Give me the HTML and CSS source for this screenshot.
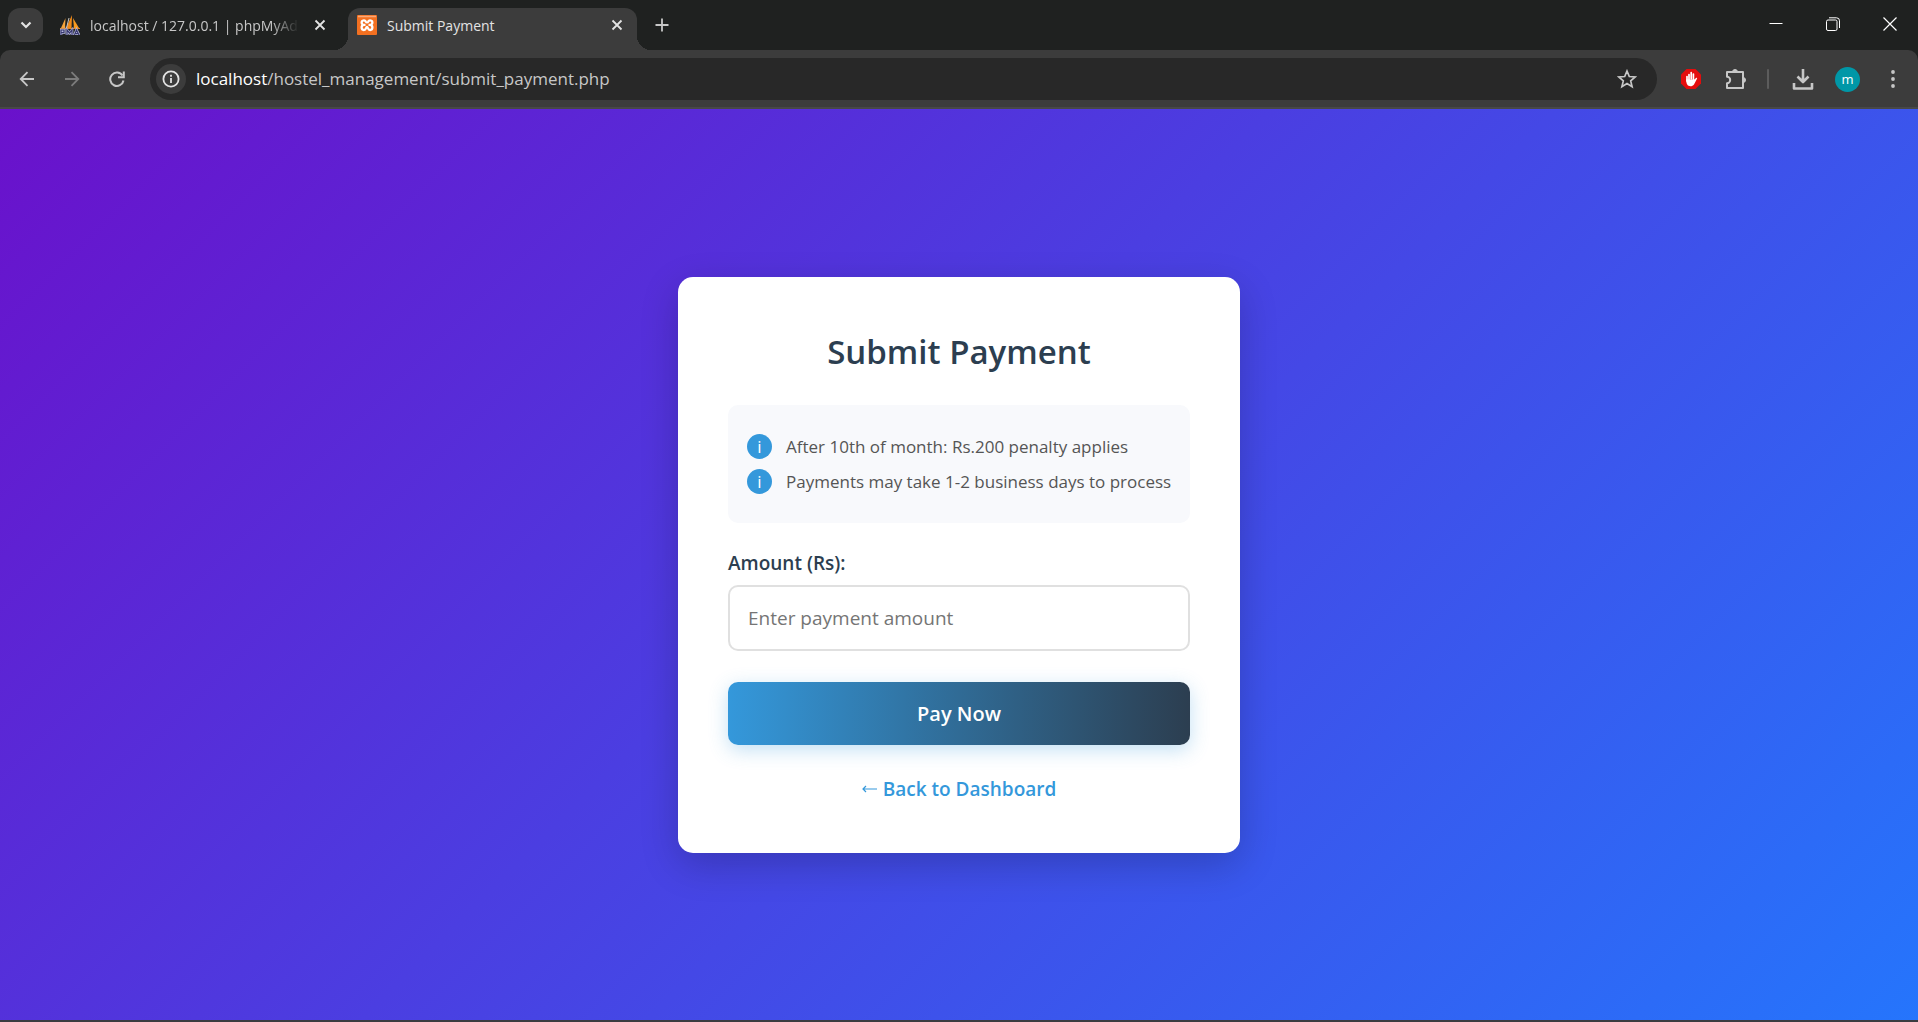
FILE: index.html
```html
<!DOCTYPE html>
<html lang="en">
<head>
<meta charset="utf-8">
<meta name="viewport" content="width=device-width, initial-scale=1">
<title>Submit Payment</title>
<link rel="stylesheet" href="styles.css">
</head>
<body>
<header class="browser">
  <div class="tab-strip">
    <button class="tab-search" type="button" aria-label="Search tabs">
      <svg width="12" height="8" viewBox="0 0 12 8"><path d="M1.5 1.5 6 6l4.500-4.500" fill="none" stroke="#e3e3e3" stroke-width="2.200"/></svg>
    </button>
    <div class="tab">
      <svg class="favicon" viewBox="0 0 20 20">
        <path d="M5.500 3 1 13h4z" fill="#f5a33a"/>
        <path d="M12 0 6 13h5.500z" fill="#f08a1a"/>
        <path d="M13 3l1 10h5z" fill="#f79a1f"/>
        <path d="M9 3 6.500 13" stroke="#c9c9c9" fill="none"/>
        <path d="M0 13.500h20" stroke="#d9822a" fill="none"/>
        <path d="M1 20v-5h3v2.500H1M7 20v-5l2.500 3 2.500-3v5M14.500 20l2-5 2.500 5M15 18.500h3" stroke="#b9bce0" stroke-width="2.600" fill="none"/>
        <path d="M1 20v-5h3v2.500H1M7 20v-5l2.500 3 2.500-3v5M14.500 20l2-5 2.500 5M15 18.500h3" stroke="#38386e" stroke-width="1.200" fill="none"/>
      </svg>
      <span class="tab-title tab-title-fade">localhost / 127.0.0.1 | phpMyAd</span>
      <button class="tab-close" type="button" aria-label="Close tab">
        <svg width="12" height="12" viewBox="0 0 12 12"><path d="m1.500 1.500 9 9m0-9-9 9" stroke="currentColor" stroke-width="1.800"/></svg>
      </button>
    </div>
    <div class="tab tab-active">
      <svg class="favicon" viewBox="0 0 20 20">
        <rect width="20" height="20" rx="1" fill="#f37021"/>
        <path d="M1 1.500h18" stroke="#f9a878" stroke-width="1.500"/>
        <path d="M8.500 9.800H6.800a2.200 2.200 0 1 1 2-3.200c.6 1 1.800 1 2.400 0a2.200 2.200 0 1 1 2 3.200h-1.700M6.800 9.800c-3 .4-2.800 5.200 0 5.200 2.600 0 2-3 3.200-3s.6 3 3.200 3c2.800 0 3-4.800 0-5.200" fill="none" stroke="#fff" stroke-width="2.300"/>
      </svg>
      <span class="tab-title">Submit Payment</span>
      <button class="tab-close" type="button" aria-label="Close tab">
        <svg width="12" height="12" viewBox="0 0 12 12"><path d="m1.500 1.500 9 9m0-9-9 9" stroke="currentColor" stroke-width="1.800"/></svg>
      </button>
    </div>
    <button class="new-tab" type="button" aria-label="New tab">
      <svg width="14" height="14" viewBox="0 0 14 14"><path d="M7 .5v13M.5 7h13" stroke="#c7c7c7" stroke-width="1.800"/></svg>
    </button>
    <div class="window-controls">
      <button type="button" aria-label="Minimize"><svg width="14" height="14" viewBox="0 0 14 14"><path d="M.5 6.500h13" stroke="#fff"/></svg></button>
      <button type="button" aria-label="Restore"><svg width="14" height="14" viewBox="0 0 14 14" fill="none" stroke="#fff"><rect x=".5" y="3" width="10.500" height="10.500" rx="1.500"/><path d="M3 .8h7.500a3 3 0 0 1 3 3V11"/></svg></button>
      <button type="button" aria-label="Close window"><svg width="14" height="14" viewBox="0 0 14 14"><path d="m.5.5 13 13m0-13-13 13" stroke="#fff" stroke-width="1.200"/></svg></button>
    </div>
  </div>
  <div class="toolbar">
    <button class="tool" type="button" aria-label="Back"><svg width="16" height="16" viewBox="0 0 16 16" fill="none" stroke="#c7c7c7" stroke-width="1.800"><path d="M15 8H2M8.500 1.200 1.700 8l6.800 6.800"/></svg></button>
    <button class="tool" type="button" aria-label="Forward" disabled><svg width="16" height="16" viewBox="0 0 16 16" fill="none" stroke="#7c7c7c" stroke-width="1.800"><path d="M1 8h13M7.500 1.200 14.300 8l-6.800 6.800"/></svg></button>
    <button class="tool" type="button" aria-label="Reload"><svg width="16" height="16" viewBox="0 0 16 16" fill="none" stroke="#c7c7c7" stroke-width="2"><path d="M14.500 9.500A6.700 6.700 0 1 1 13.500 4.500"/><path d="M14.800.5v5.800H9"/></svg></button>
    <div class="omnibox">
      <button class="site-info" type="button" aria-label="View site information"><svg width="18" height="18" viewBox="0 0 18 18"><circle cx="9" cy="9" r="7.600" fill="none" stroke="#e3e3e3" stroke-width="1.800"/><path d="M9 8v5M9 4.800v2" stroke="#e3e3e3" stroke-width="1.800"/></svg></button>
      <div class="url"><span class="url-host">localhost</span>/hostel_management/submit_payment.php</div>
      <button class="bookmark" type="button" aria-label="Bookmark this tab"><svg width="20" height="20" viewBox="0 0 20 20"><path d="m10 2 2.300 5.500 5.900.5-4.500 3.900 1.400 5.800-5.100-3.100-5.100 3.100 1.400-5.800L1.800 8l5.900-.5z" fill="none" stroke="#c7c7c7" stroke-width="1.700"/></svg></button>
    </div>
    <button class="tool" type="button" aria-label="Ad blocker"><svg width="22" height="22" viewBox="0 0 22 22"><path d="M6.500 1h9L21 6.500v9L15.500 21h-9L1 15.500v-9z" fill="#e40d0d"/><path d="M9 12V6.500M11.200 11V4.500M13.400 12V6M7 13V8.500" stroke="#fff" stroke-width="1.700" stroke-linecap="round"/><path d="M6.200 11.500h8l1.900-1.600c.8-.4 1.300.2.900.9L14 16.500c-1.500 2.400-5.500 2.200-6.600.3-.9-1.500-1.200-3-1.200-5.300" fill="#fff"/></svg></button>
    <button class="tool" type="button" aria-label="Extensions"><svg width="22" height="22" viewBox="0 0 22 22"><path d="M2 4h16v16H2v-4.800a3.200 3.200 0 0 0 0-6.400z" fill="none" stroke="#c7c7c7" stroke-width="2" stroke-linejoin="round"/><path d="M7.500 4a2.500 2.500 0 0 1 5 0M18 9.500a2.500 2.500 0 0 1 0 5" fill="#c7c7c7" stroke="#c7c7c7"/></svg></button>
    <span class="divider"></span>
    <button class="tool" type="button" aria-label="Downloads"><svg width="22" height="22" viewBox="0 0 22 22" fill="none" stroke="#c7c7c7" stroke-width="2.600"><path d="M11 1v13M5.500 8.500l5.500 5.500 5.500-5.500M2 15v5.500h18V15" stroke-linejoin="round"/></svg></button>
    <button class="tool" type="button" aria-label="Profile"><span class="avatar">m</span></button>
    <button class="tool" type="button" aria-label="Menu"><svg width="4" height="18" viewBox="0 0 4 18" fill="#c7c7c7"><circle cx="2" cy="2" r="1.900"/><circle cx="2" cy="9" r="1.900"/><circle cx="2" cy="16" r="1.900"/></svg></button>
  </div>
</header>
<main class="page">
  <section class="card">
    <h1 class="card-title">Submit Payment</h1>
    <ul class="notes">
      <li><span class="note-icon">i</span>After 10th of month: Rs.200 penalty applies</li>
      <li><span class="note-icon">i</span>Payments may take 1-2 business days to process</li>
    </ul>
    <form class="form">
      <label class="label" for="amount">Amount (Rs):</label>
      <input class="amount" id="amount" type="text" inputmode="decimal" placeholder="Enter payment amount">
      <button class="pay" type="submit">Pay Now</button>
    </form>
    <a class="back" href="#"><svg width="15" height="8" viewBox="0 0 15 8" fill="none" stroke="currentColor" stroke-width="1.200" aria-hidden="true"><path d="M15 4H1.500M4 1 1 4l3 3"/></svg>Back to Dashboard</a>
  </section>
</main>
</body>
</html>
```
FILE: styles.css
```css
* {
  box-sizing: border-box;
}

body {
  margin: 0;
  min-height: 100vh;
  display: flex;
  flex-direction: column;
  font-family: "Open Sans", "Noto Sans", sans-serif;
  background: #1f2120;
}

button {
  display: flex;
  align-items: center;
  justify-content: center;
  padding: 0;
  border: 0;
  background: none;
  color: inherit;
  font: inherit;
}

svg {
  display: block;
  flex: none;
}

/* Browser frame */
.tab-strip {
  display: flex;
  height: 50px;
  padding: 8px 0 0 8px;
  color: #c7c7c7;
  font-size: 14px;
}

.tab-search {
  width: 35px;
  height: 34px;
  border-radius: 12px;
  background: #3c3c3c;
}

.tab {
  display: flex;
  align-items: center;
  width: 289px;
  height: 42px;
  margin-left: 8px;
  padding: 0 11px 8px 9px;
}

.tab-active {
  position: relative;
  background: #3c3c3c;
  border-radius: 12px 12px 0 0;
  color: #e3e3e3;
}

.tab-active::before,
.tab-active::after {
  content: "";
  position: absolute;
  bottom: 0;
  width: 14px;
  height: 14px;
}

.tab-active::before {
  right: 100%;
  background: radial-gradient(circle at 0 0, transparent 14px, #3c3c3c 14px);
}

.tab-active::after {
  left: 100%;
  background: radial-gradient(circle at 100% 0, transparent 14px, #3c3c3c 14px);
}

.favicon {
  width: 20px;
  height: 20px;
  margin-right: 10px;
}

.tab-title {
  flex: 1;
  min-width: 0;
  padding-top: 2px;
  line-height: 20px;
  overflow: hidden;
  white-space: nowrap;
}

.tab-title-fade {
  mask-image: linear-gradient(90deg, #000 calc(100% - 28px), transparent);
}

.tab-close {
  width: 18px;
  height: 18px;
  margin-left: 12px;
  color: #e3e3e3;
}

.new-tab {
  width: 34px;
  height: 34px;
  margin-left: 8px;
}

.window-controls {
  display: flex;
  margin-left: auto;
}

.window-controls button {
  width: 57px;
  height: 32px;
}

.toolbar {
  display: flex;
  align-items: center;
  height: 59px;
  padding: 1px 3px 0 4px;
  background: #3c3c3c;
  border-bottom: 2px solid #484848;
  border-radius: 10px 10px 0 0;
}

.tool {
  width: 45px;
  height: 42px;
}

.omnibox {
  display: flex;
  flex: 1;
  align-items: center;
  height: 42px;
  margin: 0 11px;
  padding: 0 15px 0 6px;
  border-radius: 21px;
  background: #282828;
}

.site-info {
  width: 30px;
  height: 30px;
  border-radius: 50%;
  background: #3c3c3c;
}

.url {
  flex: 1;
  margin-left: 10px;
  color: #c7c7c7;
  font-size: 17px;
  line-height: 24px;
}

.url-host {
  color: #fff;
}

.bookmark {
  width: 30px;
  height: 30px;
}

.divider {
  width: 2px;
  height: 20px;
  margin: 0 11px 0 9px;
  border-radius: 1px;
  background: #5c5c5c;
}

.avatar {
  width: 25px;
  height: 25px;
  border-radius: 50%;
  background: #0097a7;
  color: #fff;
  font-size: 13px;
  line-height: 24px;
  text-align: center;
}

/* Payment page */
.page {
  display: flex;
  flex: 1;
  align-items: center;
  justify-content: center;
  padding: 24px;
  border-bottom: 2px solid #3a3b40;
  background: linear-gradient(135deg, #6a11cb 0%, #2575fc 100%) border-box;
  background-clip: padding-box;
}

.card {
  display: flex;
  flex-direction: column;
  width: 100%;
  max-width: 562px;
  padding: 50px;
  border-radius: 15px;
  background: #fff;
  box-shadow: 0 12px 38px rgba(0, 0, 0, 0.2);
}

.card-title {
  margin: 0 0 29px;
  color: #2c3e50;
  font-size: 33px;
  font-weight: 600;
  line-height: 49px;
  text-align: center;
}

.notes {
  margin: 0 0 25px;
  padding: 24px 10px 24px 19px;
  border-radius: 10px;
  background: #f8f9fc;
  color: #555;
  font-size: 17px;
  line-height: 35px;
  list-style: none;
}

.notes li {
  display: flex;
  align-items: center;
}

.note-icon {
  width: 25px;
  height: 25px;
  margin-right: 14px;
  border-radius: 50%;
  background: #3498db;
  color: #fff;
  line-height: 25px;
  text-align: center;
}

.form {
  display: flex;
  flex-direction: column;
}

.label {
  margin-bottom: 6px;
  color: #2c3e50;
  font-size: 19px;
  font-weight: 600;
  line-height: 31px;
}

.amount {
  width: 100%;
  height: 66px;
  margin-bottom: 31px;
  padding: 0 18px;
  border: 2px solid #e0e0e0;
  border-radius: 10px;
  color: #2c3e50;
  font: inherit;
  font-size: 19px;
}

.amount::placeholder {
  color: #757575;
}

.pay {
  height: 63px;
  margin-bottom: 31px;
  border-radius: 10px;
  background: linear-gradient(90deg, #3498db, #2c3e50);
  box-shadow: 0 5px 19px rgba(52, 152, 219, 0.3);
  color: #fff;
  font-size: 20px;
  font-weight: 600;
}

.back {
  display: flex;
  align-items: center;
  align-self: center;
  gap: 6px;
  color: #3498db;
  font-size: 19px;
  font-weight: 600;
  line-height: 27px;
  text-decoration: none;
}
```
